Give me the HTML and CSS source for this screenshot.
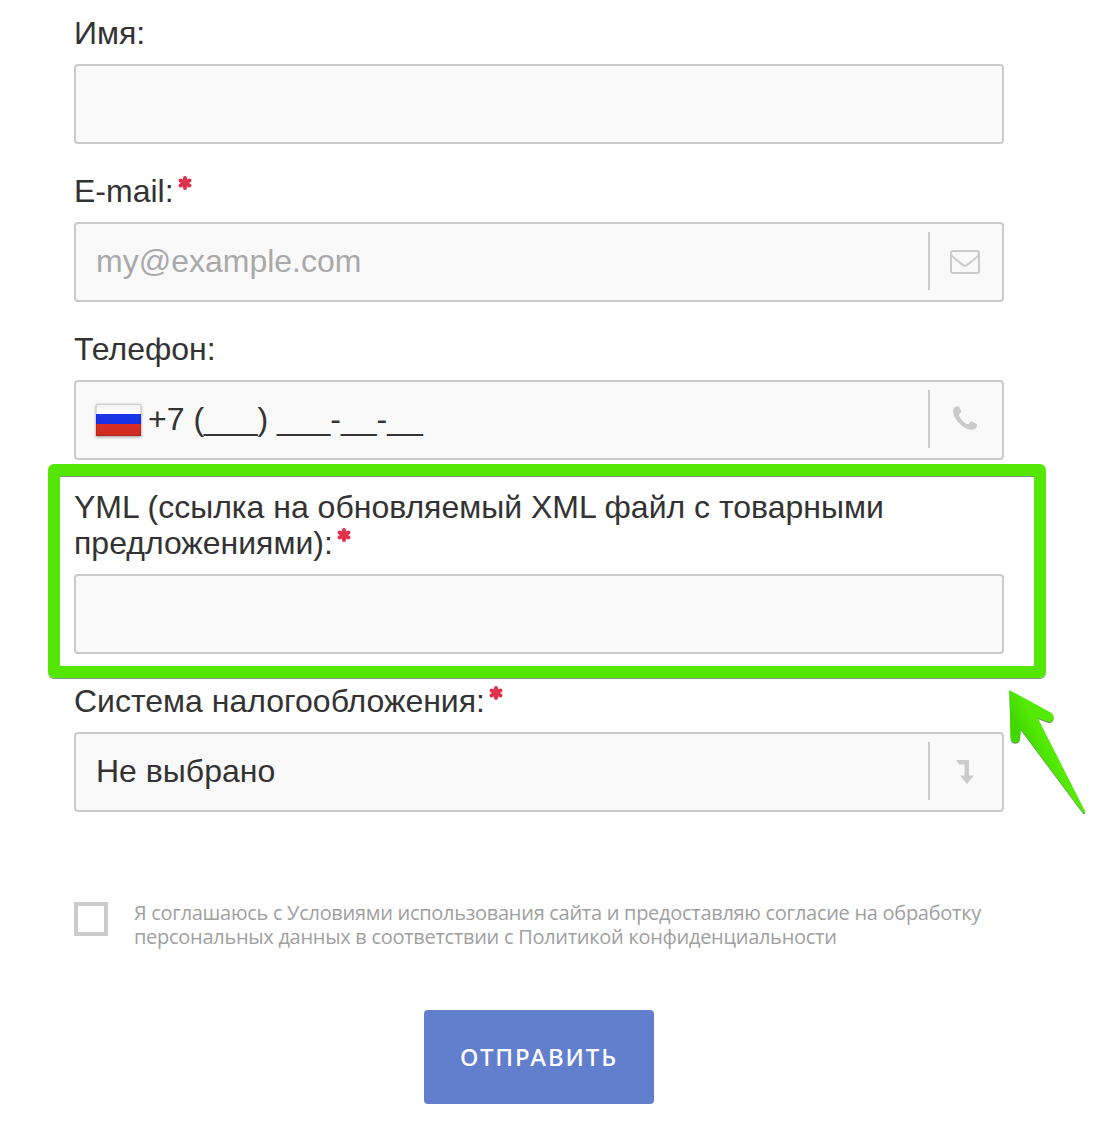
FILE: index.html
```html
<!DOCTYPE html>
<html lang="ru">
<head>
    <meta charset="UTF-8">
    <meta name="viewport" content="width=device-width, initial-scale=1.0">
    <title>Заявка</title>
    <link rel="stylesheet" href="styles.css">
</head>
<body>
    <svg class="sprite" width="0" height="0">
        <symbol id="star" viewBox="0 0 14 14">
            <path d="M7 2v10M2.600 4.500l8.800 5M11.400 4.500l-8.800 5" fill="none" stroke="#e0324b" stroke-width="4" stroke-linecap="round"/>
        </symbol>
    </svg>
    <form class="form">
        <div class="field">
            <label class="label" for="name">Имя:</label>
            <div class="control">
                <input class="input" type="text" id="name" name="name">
            </div>
        </div>

        <div class="field">
            <label class="label" for="email">E-mail:<svg class="star"><use href="#star"/></svg></label>
            <div class="control">
                <input class="input" type="email" id="email" name="email" placeholder="my@example.com">
                <span class="addon">
                    <svg width="30" height="24" viewBox="0 0 30 24" fill="none" stroke="#cbcbcb" stroke-width="2">
                        <rect x="1" y="1" width="28" height="22" rx="2"/>
                        <path d="M1.2 4.5C2 6.5 4 8 7 10.300l4.500 3.600C13.500 15.500 14.200 16 15 16s1.500-.5 3.500-2.100L23 10.300C26 8 28 6.500 28.800 4.500"/>
                    </svg>
                </span>
            </div>
        </div>

        <div class="field">
            <label class="label" for="phone">Телефон:</label>
            <div class="control">
                <span class="flag"></span>
                <input class="input input-phone" type="tel" id="phone" name="phone" value="+7 (___) ___-__-__">
                <span class="addon addon-phone">
                    <svg width="24" height="24" viewBox="0 0 24 24" fill="#cbcbcb">
                        <path d="M0 5C0 3 .8 1.600 2 .9 3.300.200 4.700 0 5.500.2c.8.500 2.600 4.100 2.800 5.200.2 1.500-2.300 2.400-2.300 3.500 0 1.500 3.400 5.900 5.700 7.800 1 .8 2.200 1.600 3 1.600 1.200 0 2.300-2.900 3.700-2.900.8 0 5 2.300 5.500 2.800.4.700.1 2.300-.6 3.500-.8 1.200-3.200 2-5.100 2-2.600 0-6.300-1.700-9.700-4.500C3.800 15.800 0 9.800 0 5z"/>
                    </svg>
                </span>
            </div>
        </div>

        <div class="field field-marked">
            <label class="label" for="yml">YML (ссылка на обновляемый XML файл с товарными предложениями):<svg class="star"><use href="#star"/></svg></label>
            <div class="control">
                <input class="input" type="text" id="yml" name="yml">
            </div>
        </div>

        <div class="field">
            <label class="label" for="tax">Система налогообложения:<svg class="star"><use href="#star"/></svg></label>
            <div class="control">
                <select class="input" id="tax" name="tax">
                    <option>Не выбрано</option>
                </select>
                <span class="addon">
                    <svg width="18" height="24" viewBox="0 0 18 24" fill="#cbcbcb">
                        <path d="M0 0h13v15.500h5L11 24 4 15.500h4.500V4.500H3.200z"/>
                    </svg>
                </span>
            </div>
            <svg class="arrow" width="90" height="136" viewBox="0 0 90 136">
                <defs>
                    <linearGradient id="arrowFill" gradientUnits="userSpaceOnUse" x1="28" y1="68" x2="44" y2="60">
                        <stop offset="0" stop-color="#41d800"/>
                        <stop offset="1" stop-color="#54ea05"/>
                    </linearGradient>
                </defs>
                <path d="M9.300 10 50.700 32.500C56 36 53.500 43 48.300 42L37.700 38 85.200 131.500Q85.300 133.500 83 132.700L20.700 49.300 20 58.700C19.500 64 11 64 10.700 58.700z" fill="url(#arrowFill)"/>
            </svg>
        </div>

        <label class="agree">
            <input class="agree-box" type="checkbox" name="agree">
            <span class="agree-text">Я соглашаюсь с Условиями использования сайта и предоставляю согласие на обработку<br>персональных данных в соответствии с Политикой конфиденциальности</span>
        </label>

        <button class="submit" type="button">ОТПРАВИТЬ</button>
    </form>
</body>
</html>
```
FILE: styles.css
```css
* {
    box-sizing: border-box;
}
body {
    margin: 0;
    background: #ffffff;
    color: #333333;
    font-family: "Liberation Sans", Arial, sans-serif;
    font-size: 32px;
    line-height: 36px;
}
.sprite {
    display: block;
}
.form {
    display: flex;
    flex-direction: column;
    gap: 29px;
    width: 930px;
    margin-left: 74px;
    padding-top: 15px;
}
.field {
    display: flex;
    flex-direction: column;
    gap: 13px;
    position: relative;
}
.star {
    width: 14px;
    height: 14px;
    margin-left: 4px;
    vertical-align: 12px;
}
.control {
    display: flex;
    align-items: center;
    height: 80px;
    border: 2px solid #cbcbcb;
    border-radius: 4px;
    background: #f9f9f9;
}
.input {
    flex: 1;
    min-width: 0;
    height: 100%;
    padding: 0 20px 2px;
    border: none;
    outline: none;
    background: none;
    color: #333333;
    font: inherit;
    appearance: none;
}
.input::placeholder {
    color: #a9a9a9;
}
.input-phone {
    padding-left: 7px;
}
.flag {
    width: 45px;
    height: 32px;
    margin-left: 20px;
    border: 1px solid rgba(0, 0, 0, 0.12);
    background: linear-gradient(#f0f0f0, #ffffff 31%, #1a38e8 31%, #1a2fe0 63%, #d83024 63%, #cc2a20) border-box;
    box-shadow: 0 1px 3px rgba(0, 0, 0, 0.4);
}
.addon {
    display: flex;
    align-items: center;
    justify-content: center;
    width: 74px;
    height: 58px;
    margin-bottom: 2px;
    padding: 2px 2px 0 0;
    border-left: 2px solid #cbcbcb;
}
.addon-phone {
    padding: 0 2px 2px 0;
}

/* зелёная рамка вокруг поля YML */
.field-marked::after {
    content: "";
    position: absolute;
    top: -25px;
    right: -42px;
    bottom: -24px;
    left: -26px;
    border: 12px solid #54e705;
    border-radius: 6px;
    box-shadow: 0 1px 0 #7d9a70, inset 0 1px 0 #7d9a70;
    pointer-events: none;
}
.arrow {
    position: absolute;
    top: -3px;
    left: 926px;
    filter: drop-shadow(0 1px 0 #6f9160);
}

.agree {
    display: flex;
    gap: 26px;
    margin-top: 60px;
}
.agree-box {
    flex-shrink: 0;
    width: 34px;
    height: 34px;
    margin: 1px 0 0;
    border: 4px solid #cbcbcb;
    background: #ffffff;
    appearance: none;
}
.agree-text {
    color: #a0a0a0;
    font-family: "Open Sans", "Noto Sans", sans-serif;
    font-size: 20px;
    letter-spacing: -0.29px;
    line-height: 24px;
    white-space: nowrap;
}
.submit {
    align-self: center;
    width: 230px;
    height: 94px;
    margin-top: 32px;
    padding-bottom: 3px;
    border: none;
    border-radius: 4px;
    background: #617fcd;
    color: #ffffff;
    font-family: "Noto Sans", sans-serif;
    font-size: 24px;
    font-weight: 500;
    letter-spacing: 1.9px;
}
```
